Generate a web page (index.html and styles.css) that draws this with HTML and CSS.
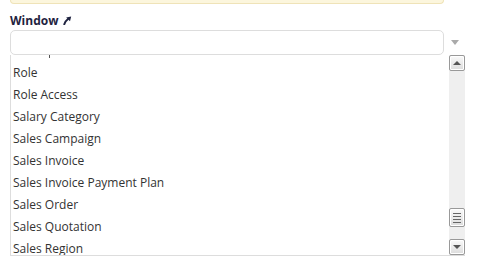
FILE: index.html
```html
<!DOCTYPE html>
<html>
<head>
    <title>Window field</title>
    <link rel="stylesheet" href="styles.css">
</head>
<body>
    <div class="alert"></div>

    <div class="field">
        <label class="field-label">
            Window
            <svg class="link-arrow" width="9" height="9" viewBox="0 0 9 9">
                <path d="M1.3 8.3 C2 6.2 3.1 4.4 5 3" fill="none" stroke="#1f2340" stroke-width="2" stroke-linecap="round"/>
                <path d="M3.2 1.5 L8.2 0.6 L7 5.3 Z" fill="#1f2340"/>
            </svg>
        </label>

        <div class="select-row">
            <input type="text" class="field-input">
            <span class="caret"></span>
        </div>

        <div class="listbox">
            <div class="options">
                <div class="option option-cut"><span class="descender"></span></div>
                <div class="option">Role</div>
                <div class="option">Role Access</div>
                <div class="option">Salary Category</div>
                <div class="option">Sales Campaign</div>
                <div class="option">Sales Invoice</div>
                <div class="option">Sales Invoice Payment Plan</div>
                <div class="option">Sales Order</div>
                <div class="option">Sales Quotation</div>
                <div class="option">Sales Region</div>
            </div>
            <div class="scrollbar">
                <div class="sb-btn"><span class="tri-up"></span></div>
                <div class="sb-track">
                    <div class="sb-thumb">
                        <i></i><i></i><i></i><i></i>
                    </div>
                </div>
                <div class="sb-btn"><span class="tri-down"></span></div>
            </div>
        </div>
    </div>
</body>
</html>
```

FILE: styles.css
```css
body {
    margin: 0;
    padding: 0 10px;
    background-color: white;
    font-family: "Open Sans", "Liberation Sans", sans-serif;
    font-size: 12px;
    color: #333;
}

.alert {
    width: 432px;
    height: 3px;
    background-color: #fcf6dd;
    border: 1px solid #efe3b8;
    border-top: none;
    border-radius: 0 0 6px 6px;
}

.field {
    margin-top: 8px;
}

.field-label {
    display: flex;
    align-items: center;
    gap: 5px;
    height: 16px;
    font-weight: 700;
    color: #1f2340;
}

.link-arrow {
    margin-top: 1px;
}

.select-row {
    display: flex;
    align-items: center;
    margin-top: 2px;
}

.field-input {
    width: 434px;
    height: 25px;
    box-sizing: border-box;
    margin: 0;
    border: 1px solid #ddd;
    border-radius: 5px;
    background: white;
    outline: none;
}

.caret {
    margin-left: 7px;
    width: 0;
    height: 0;
    border-left: 4px solid transparent;
    border-right: 4px solid transparent;
    border-top: 5px solid #aaa;
}

.listbox {
    display: flex;
    width: 455px;
    height: 201px;
    box-sizing: border-box;
    border-left: 1px solid #ddd;
    border-bottom: 1px solid #ddd;
    overflow: hidden;
}

.options {
    flex: 1;
    margin-top: -15px;
    padding-left: 2px;
}

.option {
    height: 22px;
    line-height: 22px;
    white-space: nowrap;
}

.option-cut {
    display: flex;
    align-items: flex-end;
}

.descender {
    display: block;
    width: 1px;
    height: 3px;
    margin-left: 36px;
    margin-bottom: 4px;
    background-color: #555;
}

.scrollbar {
    display: flex;
    flex-direction: column;
    width: 16px;
    background-color: #efefef;
}

.sb-btn,
.sb-thumb {
    box-sizing: border-box;
    height: 16px;
    border: 1px solid #999;
    border-radius: 2px;
    background: linear-gradient(#fafafa, #dcdcdc);
    box-shadow: inset 0 0 0 1px #fff;
    display: flex;
    align-items: center;
    justify-content: center;
}

.sb-track {
    flex: 1;
    display: flex;
    flex-direction: column;
    justify-content: flex-end;
    padding-bottom: 12px;
}

.sb-thumb {
    height: 19px;
    flex-direction: column;
    gap: 2px;
}

.sb-thumb i {
    display: block;
    width: 8px;
    height: 1px;
    background-color: #666;
}

.tri-up,
.tri-down {
    width: 0;
    height: 0;
    border-left: 4px solid transparent;
    border-right: 4px solid transparent;
}

.tri-up {
    border-bottom: 4px solid #555;
}

.tri-down {
    border-top: 4px solid #555;
}
```
